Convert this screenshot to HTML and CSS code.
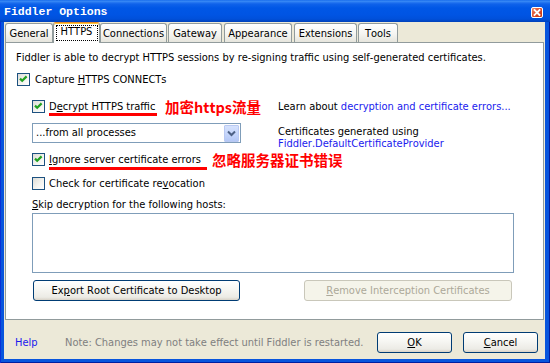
FILE: index.html
```html
<!DOCTYPE html>
<html lang="en">
<head>
<meta charset="utf-8">
<title>Fiddler Options</title>
<link rel="stylesheet" href="styles.css">
</head>
<body>
<div class="window">
  <div class="titlebar">
    <span class="title">Fiddler Options</span>
    <span class="close"><svg width="10" height="9" viewBox="0 0 10 9"><path d="M2.5 2 L7.5 7 M7.5 2 L2.5 7" stroke="#fff" stroke-width="1.8" stroke-linecap="square"/></svg></span>
  </div>
  <div class="frame">
    <div class="client">
      <div class="tabs">
        <div class="tab t-general">General</div>
        <div class="tab active t-https"><span class="focus">HTTPS</span></div>
        <div class="tab t-conn">Connections</div>
        <div class="tab t-gateway">Gateway</div>
        <div class="tab t-appear">Appearance</div>
        <div class="tab t-ext">Extensions</div>
        <div class="tab t-tools">Tools</div>
      </div>
      <div class="panel">
        <p class="intro">Fiddler is able to decrypt HTTPS sessions by re-signing traffic using self-generated certificates.</p>
        <div class="row row-capture">
          <span class="cb"><svg width="11" height="11" viewBox="0 0 11 11"><path d="M2 4.6 L4.2 6.8 L8.6 2.4" fill="none" stroke="#21a121" stroke-width="2.2"/></svg></span>
          <span class="lbl">Capture <u>H</u>TTPS CONNECTs</span>
        </div>
        <div class="row row-decrypt">
          <div class="left">
            <span class="cb"><svg width="11" height="11" viewBox="0 0 11 11"><path d="M2 4.6 L4.2 6.8 L8.6 2.4" fill="none" stroke="#21a121" stroke-width="2.2"/></svg></span>
            <span class="lbl mark mark-decrypt">D<u>e</u>crypt HTTPS traffic</span>
            <span class="annot">加密https流量</span>
          </div>
          <div class="right">Learn about <span class="link">decryption and certificate errors...</span></div>
        </div>
        <div class="row row-combo">
          <div class="left">
            <div class="combo">
              <span class="combo-text">...from all processes</span>
              <span class="combo-btn"><svg width="15" height="17" viewBox="0 0 15 17"><path d="M4 6.5 L7.5 10 L11 6.5" fill="none" stroke="#4d6185" stroke-width="2"/></svg></span>
            </div>
          </div>
          <div class="right certs">Certificates generated using<br><span class="link">Fiddler.DefaultCertificateProvider</span></div>
        </div>
        <div class="row row-ignore">
          <div class="left">
            <span class="cb"><svg width="11" height="11" viewBox="0 0 11 11"><path d="M2 4.6 L4.2 6.8 L8.6 2.4" fill="none" stroke="#21a121" stroke-width="2.2"/></svg></span>
            <span class="lbl mark mark-ignore"><u>I</u>gnore server certificate errors</span>
            <span class="annot">忽略服务器证书错误</span>
          </div>
        </div>
        <div class="row row-revoke">
          <div class="left">
            <span class="cb"></span>
            <span class="lbl">Check for certificate re<u>v</u>ocation</span>
          </div>
        </div>
        <div class="skip"><u>S</u>kip decryption for the following hosts:</div>
        <div class="hosts"></div>
        <div class="buttons">
          <button class="btn export">Ex<u>p</u>ort Root Certificate to Desktop</button>
          <button class="btn remove" disabled><u>R</u>emove Interception Certificates</button>
        </div>
      </div>
      <div class="footer">
        <span class="help">Help</span>
        <span class="note">Note: Changes may not take effect until Fiddler is restarted.</span>
        <button class="btn ok"><u>O</u>K</button>
        <button class="btn cancel"><u>C</u>ancel</button>
      </div>
    </div>
  </div>
</div>
</body>
</html>
```

FILE: styles.css
```css
* { box-sizing: border-box; }
html, body { margin: 0; padding: 0; }
body {
  width: 550px;
  height: 363px;
  overflow: hidden;
  font-family: "DejaVu Sans Condensed", "DejaVu Sans", sans-serif;
  font-stretch: condensed;
  font-kerning: none;
  font-size: 11px;
  color: #000;
  background: #0855dd;
}
u { text-decoration: underline; text-underline-offset: 1px; }

.window {
  width: 550px;
  height: 363px;
  display: flex;
  flex-direction: column;
}

/* title bar */
.titlebar {
  height: 22px;
  flex: none;
  display: flex;
  align-items: center;
  justify-content: space-between;
  padding: 0 7px 0 4px;
  background: linear-gradient(to bottom, #0a5ee8 0, #3d8ff6 1px, #2b7cf2 2px, #0f62ea 4px, #0057e6 8px, #0054e3 15px, #0050da 19px, #0041ba 22px);
}
.title {
  font-family: "Liberation Mono", monospace;
  font-weight: bold;
  font-size: 11.5px;
  color: #fff;
  margin-top: 1px;
}
.close {
  width: 12px;
  height: 11px;
  border: 1px solid #fff;
  border-radius: 2px;
  background: linear-gradient(135deg, #f08b6a, #e0512e 45%, #c2330f);
  display: flex;
  align-items: center;
  justify-content: center;
  margin-top: 2px;
}

/* frame */
.frame {
  flex: 1;
  display: flex;
  padding: 0 5px 4px 4px;
  background: #0855dd;
  box-shadow: inset 1px 0 #0831d9, inset -1px 0 #001ea0, inset 0 -1px #001ea0;
}
.client {
  flex: 1;
  display: flex;
  flex-direction: column;
  background: #ece9d8;
}

/* tabs */
.tabs {
  height: 20px;
  flex: none;
  display: flex;
  align-items: flex-end;
  padding-left: 1px;
  position: relative;
  z-index: 1;
}
.tab {
  flex: none;
  height: 19px;
  border: 1px solid #919b9c;
  border-bottom: none;
  border-radius: 3px 3px 0 0;
  background: linear-gradient(#ffffff, #f5f5f1 55%, #e6e5dd);
  text-align: center;
  line-height: 17px;
  padding-top: 1px;
  white-space: nowrap;
}
.t-general { width: 48px; }
.t-https { width: 47px; }
.t-conn { width: 67px; }
.t-gateway { width: 54px; margin-left: 1px; }
.t-appear { width: 68px; margin-left: 2px; }
.t-ext { width: 63px; margin-left: 2px; }
.t-tools { width: 40px; margin-left: 1px; }
.tab.active {
  height: 21px;
  margin-bottom: -1px;
  background: #fff;
  border-top-color: #e68b2c;
  box-shadow: inset 0 1px #ffc83c;
  padding-top: 2px;
  line-height: 12px;
}
.focus {
  display: inline-block;
  width: 42px;
  border: 1px dotted #000;
  padding-bottom: 2px;
  line-height: 12px;
}

/* panel */
.panel {
  flex: none;
  height: 278px;
  margin: 0 1px 0 1px;
  border: 1px solid #919b9c;
  background: #fff;
  display: flex;
  flex-direction: column;
}
.intro {
  margin: 8px 0 0 10px;
  line-height: 14px;
  white-space: nowrap;
}
.row {
  display: flex;
  align-items: center;
  height: 13px;
  line-height: 13px;
  white-space: nowrap;
}
.row .left {
  display: flex;
  align-items: center;
  width: 272px;
  height: 100%;
  padding-left: 26px;
  flex: none;
}
.row .left > * { flex: none; }
.cb {
  flex: none;
  width: 13px;
  height: 13px;
  border: 1px solid #1c5180;
  background: linear-gradient(135deg, #dcdcd7, #f3f3ef 55%, #ffffff);
  display: flex;
  align-items: center;
  justify-content: center;
}
.cb + .lbl { margin-left: 4px; }
.row-capture { margin-top: 8px; padding-left: 11px; }
.row-capture .cb + .lbl { margin-left: 5px; }
.row-decrypt { margin-top: 14px; }
.row-combo { margin-top: 10px; height: 20px; align-items: flex-start; }
.row-ignore { margin-top: 10px; }
.row-revoke { margin-top: 11px; }

.mark { position: relative; display: block; overflow: visible; }
.mark::after {
  content: "";
  position: absolute;
  left: 0;
  right: 0;
  height: 3px;
  background: #ff0000;
}
.mark-decrypt { width: 108px; margin-right: 8px; }
.mark-decrypt::after { top: 13px; }
.mark-ignore { width: 158px; margin-right: 5px; }
.mark-ignore::after { top: 14px; }
.annot {
  font-family: "Noto Sans CJK SC", sans-serif;
  font-weight: bold;
  font-size: 14.5px;
  color: #ff0000;
  line-height: 13px;
}
.link { color: #1a1aee; }
.certs { margin-top: 3px; line-height: 12px; }

.combo {
  width: 209px;
  height: 20px;
  border: 1px solid #7f9db9;
  background: #fff;
  display: flex;
  align-items: center;
  justify-content: space-between;
  padding: 1px;
}
.combo-text { padding-left: 2px; line-height: 16px; }
.combo-btn {
  width: 15px;
  height: 17px;
  display: flex;
  border: 1px solid #b9c9f2;
  border-radius: 1px;
  background: linear-gradient(#d6e2fd, #c3d4fb 60%, #b4c8f6);
}
.combo-btn svg { margin: -1px; }

.skip {
  margin: 8px 0 0 26px;
  line-height: 13px;
  white-space: nowrap;
}
.hosts {
  margin: 2px 0 0 26px;
  width: 482px;
  height: 60px;
  border: 1px solid #7f9db9;
  background: #fff;
}
.buttons {
  margin-top: 7px;
  padding-left: 27px;
  display: flex;
}
.btn {
  font: inherit;
  font-family: inherit;
  height: 21px;
  padding: 0;
  border: 1px solid #003c74;
  border-radius: 3px;
  color: #000;
  background: linear-gradient(#ffffff, #f6f6f2 45%, #ecebe5 85%, #d8d3c8);
  white-space: nowrap;
  line-height: 17px;
}
.export { width: 207px; }
.remove {
  width: 208px;
  margin-left: 64px;
  border-color: #c9c7ba;
  background: #f5f4ea;
  color: #aca899;
}

/* footer */
.footer {
  flex: 1;
  display: flex;
  align-items: center;
  height: 21px;
  padding: 0 7px 0 11px;
  margin-top: 12px;
  max-height: 21px;
  white-space: nowrap;
}
.help { width: 50px; color: #1a1aee; }
.note { color: #808080; }
.ok { width: 75px; margin-left: auto; }
.cancel { width: 75px; margin-left: 11px; }
```
